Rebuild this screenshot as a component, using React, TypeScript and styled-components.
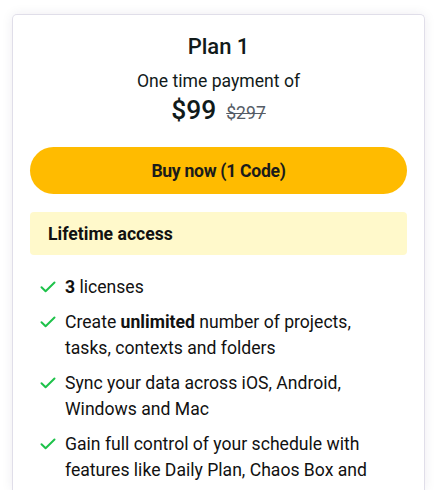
import styled, { createGlobalStyle } from 'styled-components';

const GlobalStyle = createGlobalStyle`
  body {
    margin: 0;
    background: #ffffff;
    font-family: Roboto, "Liberation Sans", sans-serif;
    color: #111a1a;
  }
`;

const Page = styled.div`
  padding: 14px 13px 0 12px;
`;

const Card = styled.div`
  border: 1px solid #e0dee9;
  border-bottom: none;
  border-radius: 5px 5px 0 0;
  box-shadow: 0 0 12px rgba(40, 30, 80, 0.08);
  padding: 17px 17px 0;
  height: 476px;
  box-sizing: border-box;
  overflow: hidden;
`;

const Header = styled.div`
  display: flex;
  flex-direction: column;
  align-items: center;
`;

const Title = styled.h2`
  margin: 0;
  font-size: 22px;
  font-weight: 500;
  line-height: 30px;
`;

const Subtitle = styled.div`
  margin-top: 7px;
  font-size: 17.6px;
  line-height: 24px;
`;

const PriceRow = styled.div`
  display: flex;
  align-items: baseline;
  gap: 10px;
  margin-top: 1px;
`;

const Price = styled.span`
  font-size: 26.4px;
  font-weight: 500;
  line-height: 32px;
`;

const OldPrice = styled.span`
  font-size: 17.6px;
  color: #555c66;
  text-decoration: line-through;
`;

const BuyButton = styled.button`
  display: block;
  width: 100%;
  height: 47px;
  margin-top: 21px;
  border: none;
  border-radius: 24px;
  background: #ffbb00;
  font-family: inherit;
  font-size: 17.6px;
  font-weight: 700;
  color: #1b1b1b;
  letter-spacing: -0.3px;
  cursor: pointer;
`;

const AccessBox = styled.div`
  margin-top: 18px;
  height: 43px;
  display: flex;
  align-items: center;
  padding: 0 18px;
  border-radius: 4px;
  background: #fff9cb;
  font-size: 17.6px;
  font-weight: 700;
  color: #111;
`;

const FeatureList = styled.ul`
  list-style: none;
  margin: 19px 0 0;
  padding: 0 40px 0 10px;
  max-height: 211px;
  overflow: hidden;
  display: flex;
  flex-direction: column;
  gap: 9px;
`;

const Feature = styled.li`
  display: flex;
  align-items: flex-start;
  gap: 9px;
  font-size: 17.6px;
  line-height: 26px;
  color: #111;
`;

const CheckWrap = styled.span`
  flex: none;
  display: flex;
  height: 26px;
  align-items: center;
`;

const Check = () => (
  <svg width="16" height="12" viewBox="0 0 16 12" fill="none">
    <path d="M1.5 6.2 L5.6 10.2 L14.5 1.5" stroke="#1ec24a" strokeWidth="2" strokeLinecap="round" strokeLinejoin="round" />
  </svg>
);

const features: React.ReactNode[] = [
  <><b>3</b> licenses</>,
  <>Create <b>unlimited</b> number of projects, tasks, contexts and folders</>,
  <>Sync your data across iOS, Android, Windows and Mac</>,
  <>Gain full control of your schedule with features like Daily Plan, Chaos Box and Smart Lists</>,
];

export default function App() {
  return (
    <>
      <GlobalStyle />
      <Page>
        <Card>
          <Header>
            <Title>Plan 1</Title>
            <Subtitle>One time payment of</Subtitle>
            <PriceRow>
              <Price>$99</Price>
              <OldPrice>$297</OldPrice>
            </PriceRow>
          </Header>
          <BuyButton>Buy now (1 Code)</BuyButton>
          <AccessBox>Lifetime access</AccessBox>
          <FeatureList>
            {features.map((f, i) => (
              <Feature key={i}>
                <CheckWrap><Check /></CheckWrap>
                <span>{f}</span>
              </Feature>
            ))}
          </FeatureList>
        </Card>
      </Page>
    </>
  );
}
